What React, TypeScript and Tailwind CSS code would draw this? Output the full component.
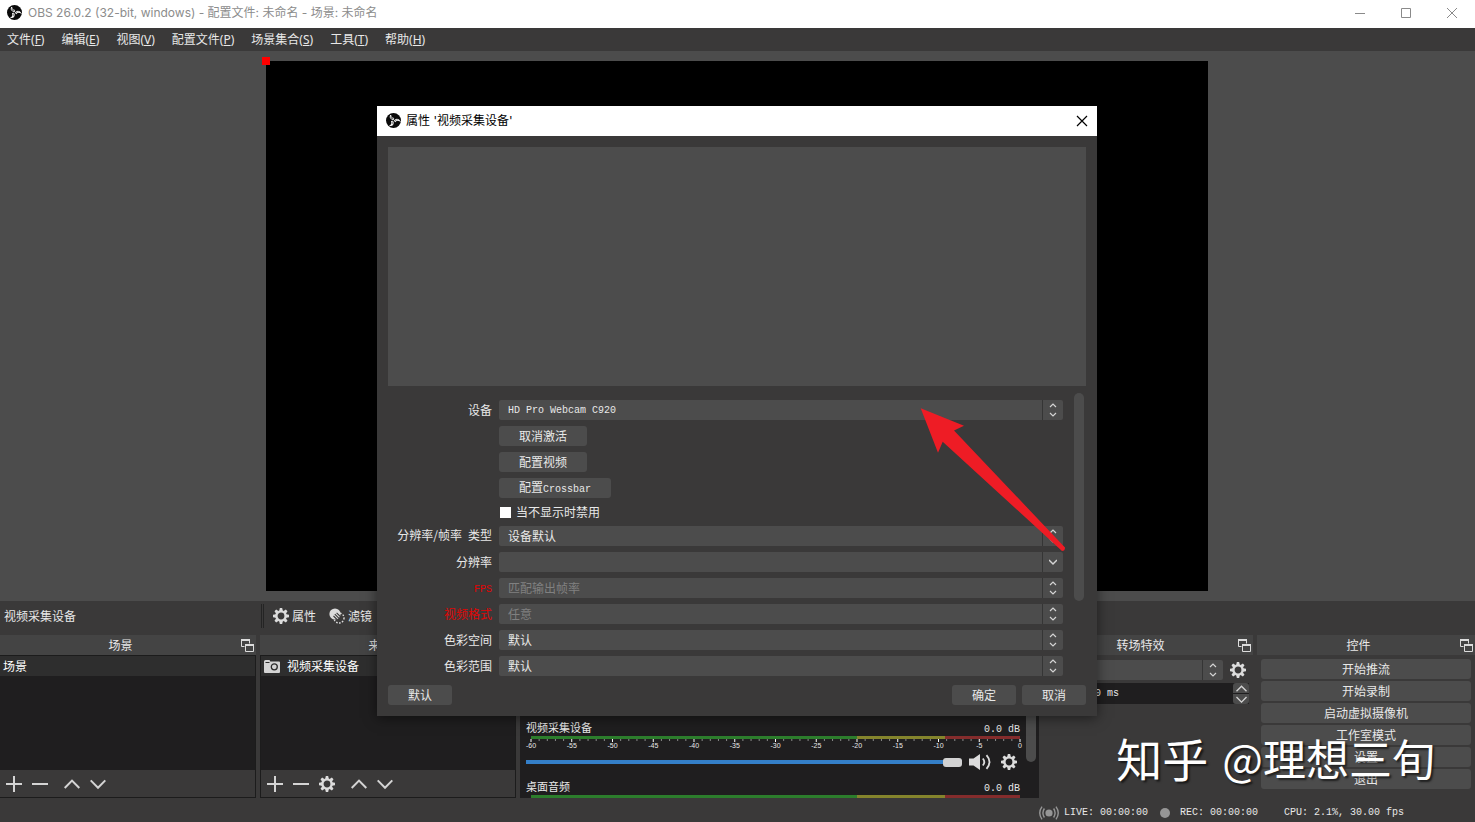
import { ReactNode } from "react";

const menus = [
  { label: "文件", hotkey: "F" },
  { label: "编辑", hotkey: "E" },
  { label: "视图", hotkey: "V" },
  { label: "配置文件", hotkey: "P" },
  { label: "场景集合", hotkey: "S" },
  { label: "工具", hotkey: "T" },
  { label: "帮助", hotkey: "H" },
];

const controls = ["开始推流", "开始录制", "启动虚拟摄像机", "工作室模式", "设置", "退出"];

const meterLabels = ["-60", "-55", "-50", "-45", "-40", "-35", "-30", "-25", "-20", "-15", "-10", "-5", "0"];

const teeth = [0, 45, 90, 135, 180, 225, 270, 315];

function ObsLogo() {
  return (
    <svg viewBox="0 0 16 16" className="size-[15px] shrink-0" fill="none" aria-hidden="true">
      <circle cx="8" cy="8" r="8" fill="#0a0a0a" />
      {[0, 120, 240].map((angle) => (
        <path
          key={angle}
          d="M8.400 7C5.400 7.200 3.600 5 5 2.200 5.200 4.400 6.400 5.600 8.600 5.800"
          stroke="#ffffff"
          strokeWidth="1"
          transform={`rotate(${angle} 8 8)`}
        />
      ))}
    </svg>
  );
}

function GearIcon() {
  return (
    <svg viewBox="0 0 16 16" className="size-4 shrink-0" aria-hidden="true">
      <circle cx="8" cy="8" r="4.6" fill="none" stroke="#dcdcdc" strokeWidth="2.4" />
      {teeth.map((angle) => (
        <path key={angle} d="M6.2 3 6.800 0h2.400l.6 3z" fill="#dcdcdc" transform={`rotate(${angle} 8 8)`} />
      ))}
    </svg>
  );
}

function LineIcon({ d, className = "size-4" }: { d: string; className?: string }) {
  return (
    <svg viewBox="0 0 16 16" className={className} fill="none" stroke="#d4d4d4" strokeWidth="2" aria-hidden="true">
      <path d={d} />
    </svg>
  );
}

const PLUS = "M8 0v16M0 8h16";
const MINUS = "M0 8h16";
const UP = "M.7 12 8 4.6l7.3 7.4";
const DOWN = "M.7 4.4 8 11.8l7.3-7.4";

function FilterIcon() {
  return (
    <svg viewBox="0 0 16 16" className="size-4 shrink-0" aria-hidden="true">
      <circle cx="6" cy="6" r="5.6" fill="#dcdcdc" />
      <circle cx="10" cy="10" r="5" fill="none" stroke="#dcdcdc" strokeWidth="1.4" strokeDasharray="1.6 1.4" />
      <path d="M4.5 8 8 11.5M5.8 6.2l4.2 4.2M7.6 4.8l3.8 3.8" stroke="#3a3939" strokeWidth="1.1" />
    </svg>
  );
}

function CameraIcon() {
  return (
    <svg viewBox="0 0 16 13" className="h-[13px] w-4 shrink-0" aria-hidden="true">
      <path d="M1.5 0h4l.8 1.5H15q1 0 1 1V12q0 1-1 1H1q-1 0-1-1V1.500Q0 0 1.500 0z" fill="#d4d4d4" />
      <circle cx="10.300" cy="6.800" r="3" fill="none" stroke="#2c2c2c" strokeWidth="1.300" />
      <path d="M1.500 2.500h4" stroke="#2c2c2c" />
    </svg>
  );
}

function SpeakerIcon() {
  return (
    <svg viewBox="0 0 22 16" className="h-4 w-[22px]" fill="none" stroke="#dcdcdc" strokeWidth="1.8" aria-hidden="true">
      <path d="M0 4.500h4.500L11 0v16l-6.500-4.500H0z" fill="#dcdcdc" stroke="none" />
      <path d="M13.800 4.500q3 3.500 0 7M17.500 1.200q6 6.800 0 13.600" />
    </svg>
  );
}

function PopOutIcon() {
  return (
    <svg viewBox="0 0 13 13" className="size-[13px]" fill="none" stroke="#dcdcdc" aria-hidden="true">
      <path d="M3.500 7.500h-3v-7h8v4" />
      <path d="M0 1h9M4 6h9" strokeWidth="2" />
      <path d="M4.500 5.500h8v7h-8z" />
    </svg>
  );
}

function BroadcastIcon() {
  return (
    <svg viewBox="0 0 20 14" className="h-[14px] w-5" fill="none" stroke="#969696" strokeWidth="1.400" aria-hidden="true">
      <circle cx="10" cy="7" r="3.600" fill="#969696" stroke="none" />
      <path d="M5.400 2.500q-3 4.500 0 9M14.600 2.500q3 4.500 0 9M3 .6q-4.500 6.400 0 12.800M17 .6q4.500 6.400 0 12.800" />
    </svg>
  );
}

function Chevrons({ single = false }: { single?: boolean }) {
  return (
    <svg viewBox="0 0 8 14" className="h-[14px] w-2" fill="none" stroke="#d4d4d4" strokeWidth="1.200" aria-hidden="true">
      {single ? <path d="M0 5l4 4 4-4" strokeWidth="1.500" /> : <path d="M1 4l3-3 3 3M1 10l3 3 3-3" />}
    </svg>
  );
}

function Mono({ children }: { children: ReactNode }) {
  return <span className="font-['Liberation_Mono',monospace] text-[10px] whitespace-pre">{children}</span>;
}

function IconButton({ label, children }: { label: string; children: ReactNode }) {
  return (
    <button type="button" aria-label={label} className="flex shrink-0 items-center justify-center">
      {children}
    </button>
  );
}

function Dock({ title, children }: { title?: string; children: ReactNode }) {
  return (
    <section className="flex min-w-0 flex-col">
      <header className="flex h-5 shrink-0 items-center bg-[#444444] pr-[2px]">
        <h2 className="flex-1 text-center">{title}</h2>
        <IconButton label="浮动">
          <PopOutIcon />
        </IconButton>
      </header>
      {children}
    </section>
  );
}

function ListDock({ title, item, configurable }: { title: string; item: ReactNode; configurable?: boolean }) {
  return (
    <Dock title={title}>
      <div
        className={`flex min-h-0 flex-1 flex-col border border-[#1c1c1c] bg-[#1f1e1f] ${configurable ? "" : "border-l-0"}`}
      >
        <div className="flex h-5 items-center bg-[#2e2e2e] px-[3px] text-white">{item}</div>
        <div className="flex-1" />
        <div className="flex h-[27px] items-center gap-[10px] bg-[#3a3939] px-[6px]">
          <IconButton label="添加"><LineIcon d={PLUS} /></IconButton>
          <IconButton label="移除"><LineIcon d={MINUS} /></IconButton>
          {configurable && <IconButton label="属性"><GearIcon /></IconButton>}
          <span className="flex gap-[10px] pl-[6px]">
            <IconButton label="上移"><LineIcon d={UP} /></IconButton>
            <IconButton label="下移"><LineIcon d={DOWN} /></IconButton>
          </span>
        </div>
      </div>
    </Dock>
  );
}

function MixerHead({ name }: { name: string }) {
  return (
    <>
      <div className="flex h-[22px] items-baseline justify-between pt-[5px] text-[11px]">
        <span>{name}</span>
        <Mono>0.0 dB</Mono>
      </div>
      <div className="ml-[5px] flex h-[3px]">
        <span className="w-2/3 bg-[#2c7d2c]" />
        <span className="w-[18%] bg-[#84842c]" />
        <span className="flex-1 bg-[#842c2c]" />
      </div>
    </>
  );
}

function MixerStrip({ name }: { name: string }) {
  return (
    <div className="flex h-[59px] shrink-0 flex-col">
      <MixerHead name={name} />
      <div className="ml-[5px]">
        <svg className="h-[3px] w-full overflow-visible" aria-hidden="true">
          {Array.from({ length: 61 }, (_, i) => (
            <line
              key={i}
              x1={`${(i / 60) * 100}%`}
              x2={`${(i / 60) * 100}%`}
              y1="0"
              y2={i % 5 === 0 ? 3 : 2}
              stroke={i % 5 === 0 ? "#ffffff" : "#8a8a8a"}
            />
          ))}
        </svg>
        <div className="flex h-2 justify-between font-['Liberation_Sans',sans-serif] text-[7px] leading-[8px]">
          {meterLabels.map((label) => (
            <span key={label} className="flex w-0 justify-center">{label}</span>
          ))}
        </div>
      </div>
      <div className="flex h-5 items-center pt-1">
        <input
          type="range"
          aria-label={`${name} 音量`}
          defaultValue={100}
          className="h-[10px] w-[436px] appearance-none bg-[linear-gradient(#347fc8,#347fc8)] bg-[length:100%_4px] bg-center bg-no-repeat [&::-webkit-slider-thumb]:h-[9px] [&::-webkit-slider-thumb]:w-[19px] [&::-webkit-slider-thumb]:appearance-none [&::-webkit-slider-thumb]:rounded-[3px] [&::-webkit-slider-thumb]:bg-[#d2d2d2]"
        />
        <span className="flex flex-1 items-center justify-between pr-[3px] pl-[7px]">
          <IconButton label="静音"><SpeakerIcon /></IconButton>
          <IconButton label="设置"><GearIcon /></IconButton>
        </span>
      </div>
    </div>
  );
}

function FormButton({ children, className }: { children: ReactNode; className: string }) {
  return (
    <button type="button" className={`h-5 rounded-[3px] bg-[#4c4c4c] text-center ${className}`}>
      {children}
    </button>
  );
}

interface SelectRowProps {
  id: string;
  label: ReactNode;
  value: string;
  invalid?: boolean;
  disabled?: boolean;
  latin?: boolean;
  single?: boolean;
}

function SelectRow({ id, label, value, invalid, disabled, latin, single }: SelectRowProps) {
  return (
    <>
      <label htmlFor={id} className={`text-right ${invalid ? "text-[#e00505]" : ""}`}>{label}</label>
      <div className="grid h-5 grid-cols-[1fr_21px]">
        <select
          id={id}
          disabled={disabled}
          className={`col-span-2 col-start-1 row-start-1 h-5 w-full appearance-none rounded-[2px] bg-[#4c4c4c] pl-[9px] ${
            latin ? "pt-px font-['Liberation_Mono',monospace] text-[10px]" : "text-[12px]"
          } ${disabled ? "text-[#808080] opacity-100" : "text-[#e8e8e8]"}`}
        >
          <option>{value}</option>
        </select>
        <span className="pointer-events-none z-10 col-start-2 row-start-1 flex items-center justify-center border-l border-[#353535]">
          <Chevrons single={single} />
        </span>
      </div>
    </>
  );
}

function PropertiesDialog() {
  return (
    <div
      role="dialog"
      aria-labelledby="dialog-title"
      className="relative w-[720px] bg-[#3a3939] shadow-[0_2px_12px_rgba(0,0,0,0.5)]"
    >
      <header className="flex h-[30px] items-center bg-white px-[9px] pb-px text-black">
        <ObsLogo />
        <h1 id="dialog-title" className="flex-1 pl-[5px] font-[Inter,'Noto_Sans_CJK_SC',sans-serif]">
          属性 '视频采集设备'
        </h1>
        <button type="button" aria-label="关闭">
          <svg viewBox="0 0 12 12" className="size-3" stroke="#000000" strokeWidth="1.200" aria-hidden="true">
            <path d="M1 1l10 10M11 1 1 11" />
          </svg>
        </button>
      </header>

      <div className="px-[11px] py-[11px]">
        <div className="h-[239px] bg-[#4c4c4c]" />

        {/* Property form */}
        <div className="flex gap-[11px] pt-[7px] pr-[2px]">
          <form className="grid flex-1 grid-cols-[104px_1fr] items-center gap-x-[7px] gap-y-[6px] pt-[7px]">
            <SelectRow id="device" label="设备" value="HD Pro Webcam C920" latin />
            <div className="col-start-2 flex flex-col gap-[6px]">
              <FormButton className="w-[88px]">取消激活</FormButton>
              <FormButton className="w-[88px]">配置视频</FormButton>
              <FormButton className="w-28">配置<Mono>Crossbar</Mono></FormButton>
            </div>
            <label className="col-start-2 flex h-4 items-center gap-[5px] pl-px">
              <input type="checkbox" className="size-[11px] appearance-none bg-white" />
              当不显示时禁用
            </label>
            <SelectRow id="res-type" label={<>分辨率/帧率<Mono> </Mono>类型</>} value="设备默认" />
            <SelectRow id="resolution" label="分辨率" value="" single />
            <SelectRow id="fps" label={<Mono>FPS</Mono>} value="匹配输出帧率" invalid disabled />
            <SelectRow id="format" label="视频格式" value="任意" invalid disabled />
            <SelectRow id="color-space" label="色彩空间" value="默认" />
            <SelectRow id="color-range" label="色彩范围" value="默认" />
          </form>
          <div className="h-[208px] w-[10px] rounded-full bg-[#4c4c4c]" />
        </div>

        <footer className="flex gap-[6px] pt-[9px]">
          <FormButton className="mr-auto w-16">默认</FormButton>
          <FormButton className="w-16">确定</FormButton>
          <FormButton className="w-16">取消</FormButton>
        </footer>
      </div>

      {/* Arrow pointing at the device field */}
      <svg
        viewBox="0 0 146 146"
        className="pointer-events-none absolute top-[301px] left-[543px] z-20 size-[146px]"
        aria-hidden="true"
      >
        <path
          d="M.7 1.300 44 18.700 34 23.500 145 140.500Q145 144 142 144L22.700 34.700 18 45.700z"
          fill="#ee1c25"
        />
      </svg>
    </div>
  );
}

export default function App() {
  return (
    <div className="relative flex h-screen min-h-[740px] flex-col overflow-hidden bg-[#3a3939] font-['Noto_Sans_CJK_SC',sans-serif] text-[12px] leading-[16px] text-[#e8e8e8]">
      {/* Window title */}
      <header className="flex h-7 shrink-0 items-center bg-white pr-[17px] pb-[3px] pl-[7px] font-[Inter,'Noto_Sans_CJK_SC',sans-serif] text-[#8c8c8c]">
        <ObsLogo />
        <p className="flex-1 pl-[6px]">OBS 26.0.2 (32-bit, windows) - 配置文件: 未命名 - 场景: 未命名</p>
        <div className="flex gap-[34px]">
          <button type="button" aria-label="最小化">
            <svg viewBox="0 0 12 12" className="size-3" stroke="#8a8a8a"><path d="M1 6.500h10" /></svg>
          </button>
          <button type="button" aria-label="最大化">
            <svg viewBox="0 0 12 12" className="size-3" fill="none" stroke="#8a8a8a"><path d="M1.500 1.500h9v9h-9z" /></svg>
          </button>
          <button type="button" aria-label="关闭">
            <svg viewBox="0 0 12 12" className="size-3" stroke="#8a8a8a"><path d="M1 1l10 10M11 1 1 11" /></svg>
          </button>
        </div>
      </header>

      <nav className="flex h-[23px] shrink-0 items-center gap-[17px] px-[7px] font-['Noto_Sans','Noto_Sans_CJK_SC',sans-serif]">
        {menus.map((menu) => (
          <button key={menu.hotkey} type="button">
            {menu.label}(<u>{menu.hotkey}</u>)
          </button>
        ))}
      </nav>

      {/* Preview */}
      <main className="flex min-h-0 flex-1 justify-center bg-[#4c4c4c] py-[10px] pr-px">
        <div className="relative aspect-video bg-black">
          <span className="absolute -top-1 -left-1 size-2 bg-[#ff0000]" />
        </div>
      </main>

      <div className="flex h-[34px] shrink-0 items-center pb-1">
        <span className="w-[261px] pl-1">视频采集设备</span>
        <span className="h-6 w-[3px] border-x border-[#242424]" />
        <button type="button" className="flex items-center gap-[3px] pl-[9px]">
          <GearIcon />
          属性
        </button>
        <button type="button" className="flex items-center gap-[3px] pl-[13px]">
          <FilterIcon />
          滤镜
        </button>
      </div>

      {/* Docks */}
      <div className="grid h-[163px] shrink-0 grid-cols-[256fr_256fr_519fr_210fr_218fr] grid-rows-[163px] gap-1">
        <ListDock title="场景" item="场景" />
        <ListDock
          title="来源"
          configurable
          item={
            <span className="flex items-center gap-[7px]">
              <CameraIcon />
              视频采集设备
            </span>
          }
        />

        <Dock>
          <div className="flex min-h-0 flex-1 justify-between overflow-hidden bg-[#1f1e1f] pr-[3px] pl-[6px]">
            <div className="w-[494px] pt-[59px]">
              <MixerStrip name="视频采集设备" />
              <MixerHead name="桌面音频" />
            </div>
            <div className="h-[107px] w-[10px] rounded-b-full bg-[#4c4c4c]" />
          </div>
        </Dock>

        <Dock title="转场特效">
          <div className="flex items-center gap-[7px] pt-[5px] pr-[7px]">
            <div className="grid h-5 flex-1 grid-cols-[1fr_21px]">
              <select aria-label="转场" className="col-span-2 col-start-1 row-start-1 h-5 appearance-none rounded-[2px] bg-[#4c4c4c]" />
              <span className="pointer-events-none z-10 col-start-2 row-start-1 flex items-center justify-center border-l border-[#353535]">
                <Chevrons />
              </span>
            </div>
            <IconButton label="转场属性"><GearIcon /></IconButton>
          </div>
          <div className="flex pt-[3px] pr-1 pl-[34px]">
            <input
              aria-label="时长"
              defaultValue="300 ms"
              className="h-[21px] min-w-0 flex-1 bg-[#1f1e1f] pl-[6px] font-['Liberation_Mono',monospace] text-[10px]"
            />
            <span className="flex w-4 flex-col gap-px bg-[#1f1e1f]">
              <button type="button" aria-label="增加" className="flex h-[10px] items-center justify-center rounded-t-[3px] bg-[#4c4c4c]">
                <LineIcon d={UP} className="size-[11px]" />
              </button>
              <button type="button" aria-label="减少" className="flex h-[10px] items-center justify-center rounded-b-[3px] bg-[#4c4c4c]">
                <LineIcon d={DOWN} className="size-[11px]" />
              </button>
            </span>
          </div>
        </Dock>

        <Dock title="控件">
          <div className="flex flex-col gap-[2px] px-1 pt-1">
            {controls.map((label) => (
              <FormButton key={label} className="w-full">{label}</FormButton>
            ))}
          </div>
        </Dock>
      </div>

      {/* Status bar */}
      <footer className="flex h-6 shrink-0 items-center justify-end gap-[5px] pt-[5px] pr-[71px]">
        <BroadcastIcon />
        <Mono>LIVE: 00:00:00</Mono>
        <span className="mr-[5px] ml-[7px] size-[10px] rounded-full bg-[#969696]" />
        <Mono>REC: 00:00:00</Mono>
        <span className="w-4" />
        <Mono>CPU: 2.1%, 30.00 fps</Mono>
      </footer>

      <div className="absolute inset-x-0 top-[106px] flex justify-center pr-px">
        <PropertiesDialog />
      </div>

      <p className="pointer-events-none absolute right-10 bottom-[33px] z-30 flex items-center gap-[14px] text-[43px] leading-[64px] text-white [text-shadow:2px_2px_2px_rgba(0,0,0,0.6)]">
        <span className="text-[46px]">知乎</span>
        <span>@理想三旬</span>
      </p>
    </div>
  );
}
